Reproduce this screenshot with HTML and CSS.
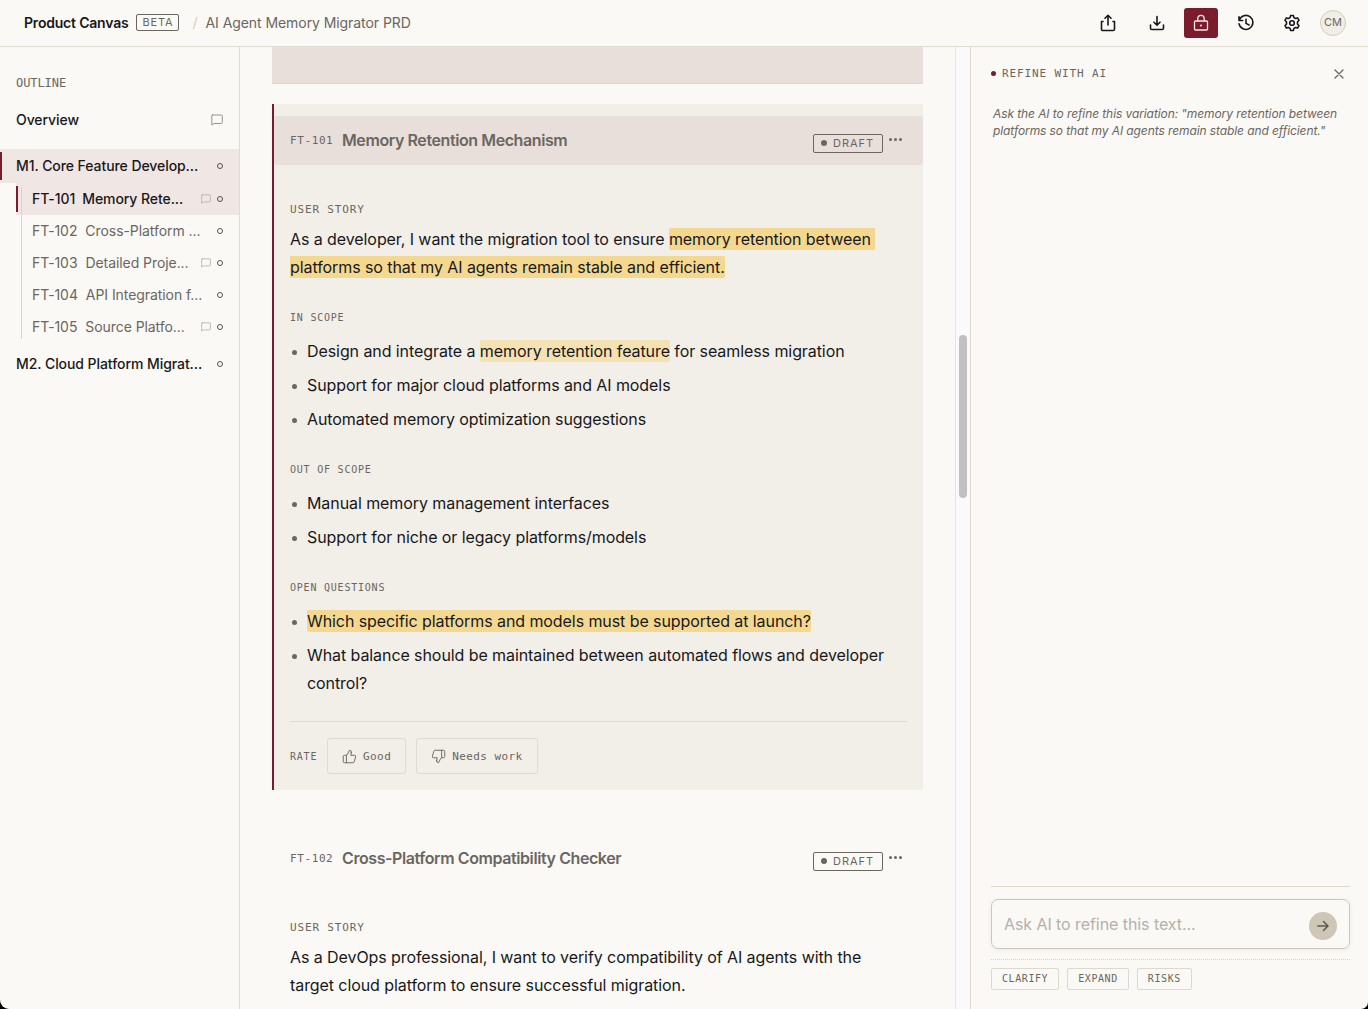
FILE: index.html
```html
<!DOCTYPE html>
<html lang="en">

<head>
  <meta charset="UTF-8" />
  <title>Product Canvas</title>
  <link rel="stylesheet" href="styles.css">
</head>

<body>
  <svg class="defs" width="0" height="0">
    <symbol id="icon-comment" viewBox="0 0 12 12">
      <path d="M1.5 1h9a.8.8 0 0 1 .8.8v6.9a.8.8 0 0 1-.8.8H3L.8 11V1.8A.8.8 0 0 1 1.5 1z" />
    </symbol>
    <symbol id="icon-thumb" viewBox="0 0 24 24">
      <path d="M7 10v12" />
      <path d="M15 5.88 14 10h5.83a2 2 0 0 1 1.92 2.56l-2.33 8A2 2 0 0 1 17.5 22H4a2 2 0 0 1-2-2v-8a2 2 0 0 1 2-2h2.76a2 2 0 0 0 1.79-1.11L12 2a3.13 3.13 0 0 1 3 3.88Z" />
    </symbol>
  </svg>

  <div class="app">
    <header class="topbar">
      <span class="brand">Product Canvas</span>
      <span class="beta">BETA</span>
      <span class="slash">/</span>
      <span class="doc-title">AI Agent Memory Migrator PRD</span>

      <div class="actions">
        <button class="icon-btn" aria-label="Share">
          <svg width="18" height="18" viewBox="0 0 18 18"><path d="M4 7.5H2.5v7.7a1.3 1.3 0 0 0 1.3 1.3h10.4a1.3 1.3 0 0 0 1.3-1.3V7.5H14M9 11V1.5M6 4.3l3-3 3 3" /></svg>
        </button>
        <button class="icon-btn" aria-label="Download">
          <svg width="18" height="18" viewBox="0 0 18 18"><path d="M2.5 11v3.2a1.3 1.3 0 0 0 1.3 1.3h10.4a1.3 1.3 0 0 0 1.3-1.3V11M9 2.5V11M6 8.2l3 3 3-3" /></svg>
        </button>
        <button class="icon-btn locked" aria-label="Lock">
          <svg width="18" height="18" viewBox="0 0 18 18"><rect x="2.5" y="7" width="13" height="9" rx="1" /><path d="M5.8 7V4.5a3.2 3.2 0 0 1 6.4 0V7" /><circle class="fill" cx="9" cy="11.5" r="1.1" /></svg>
        </button>
        <button class="icon-btn" aria-label="History">
          <svg width="18" height="18" viewBox="0 0 18 18"><path d="M2 2.8v3.7h3.7M2.2 6.3A7 7 0 1 1 2 9.7M9 5.2V9.4l3 1.6" /></svg>
        </button>
        <button class="icon-btn" aria-label="Settings">
          <svg width="18" height="18" viewBox="0 0 18 18"><path d="M7.6 1.5h2.8l.5 2.1 1.6.9 2.1-.6 1.4 2.4L14.5 8v2l1.5 1.7-1.4 2.4-2.1-.6-1.6.9-.5 2.1H7.6l-.5-2.1-1.6-.9-2.1.6L2 11.7 3.5 10V8L2 6.3l1.4-2.4 2.1.6 1.6-.9z" /><circle cx="9" cy="9" r="2.3" /></svg>
        </button>
        <span class="avatar">CM</span>
      </div>
    </header>

    <div class="workspace">
      <nav class="outline">
        <div class="outline-title">OUTLINE</div>
        <div class="row overview"><span>Overview</span><svg class="comment"><use href="#icon-comment" /></svg></div>
        <div class="row milestone active"><span>M1. Core Feature Develop...</span><i class="dot"></i></div>
        <div class="features">
          <div class="row feature active"><b>FT-101</b><span>Memory Rete...</span><svg class="comment"><use href="#icon-comment" /></svg><i class="dot"></i></div>
          <div class="row feature"><b>FT-102</b><span>Cross-Platform ...</span><i class="dot"></i></div>
          <div class="row feature"><b>FT-103</b><span>Detailed Proje...</span><svg class="comment"><use href="#icon-comment" /></svg><i class="dot"></i></div>
          <div class="row feature"><b>FT-104</b><span>API Integration f...</span><i class="dot"></i></div>
          <div class="row feature"><b>FT-105</b><span>Source Platfo...</span><svg class="comment"><use href="#icon-comment" /></svg><i class="dot"></i></div>
        </div>
        <div class="row milestone last"><span>M2. Cloud Platform Migrat...</span><i class="dot"></i></div>
      </nav>

      <main class="canvas">
        <div class="previous"></div>

        <section class="card selected">
          <div class="card-head">
            <span class="ft-id">FT-101</span>
            <h2>Memory Retention Mechanism</h2>
            <span class="status">DRAFT</span>
            <span class="more"><i></i><i></i><i></i></span>
          </div>
          <div class="card-body">
            <h3 class="story">USER STORY</h3>
            <p>As a developer, I want the migration tool to ensure <mark>memory retention between&nbsp;<br>platforms so that my AI agents remain stable and efficient.</mark></p>

            <h3>IN SCOPE</h3>
            <ul>
              <li>Design and integrate a <mark class="light">memory retention feature</mark> for seamless migration</li>
              <li>Support for major cloud platforms and AI models</li>
              <li>Automated memory optimization suggestions</li>
            </ul>

            <h3>OUT OF SCOPE</h3>
            <ul>
              <li>Manual memory management interfaces</li>
              <li>Support for niche or legacy platforms/models</li>
            </ul>

            <h3>OPEN QUESTIONS</h3>
            <ul>
              <li><mark>Which specific platforms and models must be supported at launch?</mark></li>
              <li>What balance should be maintained between automated flows and developer control?</li>
            </ul>

            <div class="rate">
              <span>RATE</span>
              <button><svg><use href="#icon-thumb" /></svg>Good</button>
              <button><svg class="down"><use href="#icon-thumb" /></svg>Needs work</button>
            </div>
          </div>
        </section>

        <section class="card">
          <div class="card-head">
            <span class="ft-id">FT-102</span>
            <h2>Cross-Platform Compatibility Checker</h2>
            <span class="status">DRAFT</span>
            <span class="more"><i></i><i></i><i></i></span>
          </div>
          <div class="card-body">
            <h3 class="story">USER STORY</h3>
            <p>As a DevOps professional, I want to verify compatibility of AI agents with the<br>target cloud platform to ensure successful migration.</p>
          </div>
        </section>
      </main>

      <div class="scrollbar"><div class="thumb"></div></div>

      <aside class="refine">
        <div class="refine-head">
          <i class="bullet"></i>
          <span>REFINE WITH AI</span>
          <svg width="10" height="10" viewBox="0 0 10 10"><path d="M1 1l8 8M9 1 1 9" /></svg>
        </div>
        <p class="hint">Ask the AI to refine this variation: "memory retention between<br>platforms so that my AI agents remain stable and efficient."</p>

        <div class="composer">
          <div class="prompt">
            <span>Ask AI to refine this text...</span>
            <button aria-label="Send"><svg width="12" height="12" viewBox="0 0 12 12"><path d="M.8 6h10M6.5 1.5 11 6l-4.5 4.5" /></svg></button>
          </div>
          <div class="chips">
            <button>CLARIFY</button>
            <button>EXPAND</button>
            <button>RISKS</button>
          </div>
        </div>
      </aside>
    </div>
  </div>
</body>

</html>
```

FILE: styles.css
```css
:root {
  --bg: #faf9f5;
  --line: #deddcf;
  --ink: #18181b;
  --muted: #6b665f;
  --wine: #7a1c2b;
  --tan: #cec6b7;
  --mono: 'DejaVu Sans Mono', monospace;
}

* {
  box-sizing: border-box;
}

body {
  margin: 0;
  background: #000;
  color: var(--ink);
  font-family: Inter, sans-serif;
}

button {
  font: inherit;
  letter-spacing: inherit;
  color: inherit;
  background: none;
  border: none;
  padding: 0;
}

svg {
  fill: none;
  stroke: currentColor;
  stroke-linecap: round;
  stroke-linejoin: round;
  flex: none;
}

.defs {
  display: none;
}

.app {
  display: flex;
  flex-direction: column;
  height: 100vh;
  background: var(--bg);
  border-radius: 0 0 7px 9px;
  overflow: hidden;
}

/* Top bar */
.topbar {
  display: flex;
  align-items: center;
  flex: none;
  height: 47px;
  padding: 0 22px 1px 24px;
  border-bottom: 1px solid var(--line);
  font-size: 14px;
}

.brand {
  font-weight: 600;
  letter-spacing: -0.2px;
}

.beta {
  margin-left: 8px;
  width: 43px;
  height: 17px;
  border: 1px solid var(--muted);
  border-radius: 2px;
  color: var(--muted);
  font-size: 11px;
  line-height: 15px;
  letter-spacing: 0.9px;
  text-align: center;
}

.slash {
  margin: 0 8px 0 13px;
  color: #d5cfbe;
}

.doc-title {
  color: var(--muted);
  letter-spacing: -0.07px;
}

.actions {
  display: flex;
  align-items: center;
  margin-left: auto;
}

.icon-btn {
  display: flex;
  align-items: center;
  justify-content: center;
  width: 34px;
  height: 30px;
  margin-right: 12px;
  border-radius: 3px;
  stroke-width: 1.6;
}

.icon-btn:first-child {
  margin-right: 15px;
}

.icon-btn:nth-child(2) {
  margin-right: 10px;
}

.icon-btn:nth-child(3) {
  margin-right: 11px;
}

.icon-btn:nth-child(5) {
  margin-right: 11px;
}

.locked {
  background: var(--wine);
  color: #f5e6e6;
  stroke-width: 1.3;
}

.locked .fill {
  fill: currentColor;
  stroke: none;
}

.avatar {
  width: 26px;
  height: 26px;
  border: 1px solid #d3ccbc;
  border-radius: 50%;
  background: #f1eee7;
  color: var(--muted);
  font-size: 11px;
  line-height: 23px;
  text-align: center;
}

.workspace {
  display: flex;
  flex: 1;
  min-height: 0;
}

/* Outline */
.outline {
  flex: none;
  width: 240px;
  padding-top: 28px;
  border-right: 1px solid var(--line);
  font-size: 14px;
  letter-spacing: -0.07px;
}

.outline-title {
  padding-left: 16px;
  color: var(--muted);
  font-family: var(--mono);
  font-size: 12px;
  line-height: 16px;
}

.row {
  display: flex;
  align-items: center;
  position: relative;
  height: 32px;
  padding: 0 16px;
  font-weight: 500;
  white-space: nowrap;
}

.row span {
  flex: 1;
}

.milestone span,
.feature span,
.feature b {
  padding-bottom: 2px;
}

.overview {
  margin: 13px 0 14px;
  height: 31px;
}

.comment {
  width: 12px;
  height: 12px;
  color: #96928c;
}

.feature .comment {
  width: 10px;
  height: 10px;
  margin-right: 6px;
  color: #b5b0ab;
}

.dot {
  width: 6px;
  height: 6px;
  border: 1px solid #57524c;
  border-radius: 50%;
}

.milestone.active {
  height: 34px;
  background: #f0e6e4;
}

.row.active::before {
  content: '';
  position: absolute;
  left: 0;
  top: 3px;
  bottom: 3px;
  width: 2px;
  background: var(--wine);
}

.features {
  position: relative;
  margin-left: 16px;
}

.features::after {
  content: '';
  position: absolute;
  left: 5px;
  top: 4px;
  bottom: 4px;
  width: 1px;
  background: #d9d4cc;
}

.feature {
  color: var(--muted);
  font-weight: 400;
}

.feature b {
  margin-right: 8px;
  font-weight: inherit;
}

.feature.active {
  background: #f0e6e4;
  color: var(--ink);
  font-weight: 500;
}

.feature.active b {
  margin-right: 7px;
}

.last {
  margin-top: 5px;
}

/* Canvas */
.canvas {
  flex: none;
  width: 715px;
  padding: 0 32px;
  overflow: hidden;
}

.previous {
  height: 37px;
  margin-bottom: 20px;
  background: #e8dfda;
  border-bottom: 1px solid #e0d6d1;
}

.card {
  margin-bottom: 32px;
  padding-top: 12px;
  border-left: 2px solid transparent;
}

.card.selected {
  background: #f2eee8;
  border-left-color: var(--wine);
}

.card-head {
  display: flex;
  align-items: center;
  height: 49px;
  padding: 0 21px 1px 16px;
  border-radius: 3px;
  color: var(--muted);
}

.selected .card-head {
  background: #e8dfda;
}

.ft-id {
  width: 52px;
  font-family: var(--mono);
  font-size: 11px;
  letter-spacing: 0.6px;
}

.card h2 {
  flex: 1;
  margin: 0;
  padding-bottom: 1px;
  font-size: 16px;
  font-weight: 600;
  letter-spacing: -0.41px;
}

.status {
  display: flex;
  align-items: center;
  width: 70px;
  height: 19px;
  margin: 7px 6px 0 0;
  padding: 0 0 1px 7px;
  border: 1px solid var(--muted);
  border-radius: 2px;
  font-size: 11px;
  letter-spacing: 1px;
}

.status::before {
  content: '';
  width: 6px;
  height: 6px;
  margin-right: 6px;
  border-radius: 50%;
  background: var(--muted);
}

.more {
  display: flex;
  gap: 2px;
  padding-bottom: 1px;
}

.more i {
  width: 3px;
  height: 3px;
  border-radius: 50%;
  background: var(--muted);
}

.card-body {
  padding: 37px 16px 16px;
}

.card h3 {
  margin: 29px 0 11px;
  color: var(--muted);
  font-family: var(--mono);
  font-size: 10px;
  font-weight: 400;
  line-height: 16px;
  letter-spacing: 0.78px;
}

.card h3.story {
  margin: 0 0 7px;
  font-size: 11px;
  letter-spacing: 0.85px;
}

.card p,
.card ul {
  margin: 0;
  font-size: 16px;
  line-height: 28px;
  letter-spacing: -0.08px;
}

.card ul {
  padding: 0;
  list-style: none;
}

.card li {
  position: relative;
  padding-left: 17px;
}

.card li + li {
  margin-top: 6px;
}

.card li::before {
  content: '';
  position: absolute;
  left: 2px;
  top: 13px;
  width: 5px;
  height: 5px;
  border-radius: 50%;
  background: var(--muted);
}

mark {
  padding: 1px 0;
  border-radius: 2px;
  background: #f5d88f;
  color: inherit;
}

mark.light {
  background: #f4e2b3;
}

.rate {
  display: flex;
  align-items: center;
  gap: 10px;
  margin-top: 24px;
  padding-top: 16px;
  border-top: 1px solid #dedbd3;
  color: var(--muted);
  font-family: var(--mono);
  font-size: 11px;
  letter-spacing: 0.42px;
}

.rate span {
  width: 27px;
  font-size: 10px;
  letter-spacing: 0.78px;
}

.rate button {
  display: flex;
  align-items: center;
  gap: 6px;
  height: 36px;
  padding: 0 14px;
  border: 1px solid #dedbd3;
  border-radius: 3px;
}

.rate svg {
  width: 15px;
  height: 15px;
  stroke-width: 1.5;
}

.rate .down {
  transform: rotate(180deg);
}

.scrollbar {
  flex: none;
  width: 15px;
  padding: 288px 3px 0;
  border-left: 1px solid #e6e5e3;
  background: #fafafa;
}

.thumb {
  height: 163px;
  border-radius: 4px;
  background: #c1c1c1;
}

/* Refine panel */
.refine {
  display: flex;
  flex-direction: column;
  flex: 1;
  padding: 18px 18px 19px 20px;
  border-left: 1px solid #dedbcd;
}

.refine-head {
  display: flex;
  align-items: center;
  height: 18px;
  padding-right: 6px;
  color: var(--muted);
  font-family: var(--mono);
  font-size: 11px;
  letter-spacing: 0.88px;
  stroke-width: 1.3;
}

.refine-head span {
  flex: 1;
  padding-bottom: 2px;
}

.bullet {
  width: 5px;
  height: 5px;
  margin: 0 6px 1px 0;
  border-radius: 50%;
  background: var(--wine);
}

.hint {
  margin: 22px 0 0 2px;
  color: var(--muted);
  font-size: 12px;
  font-style: italic;
  line-height: 17px;
  letter-spacing: -0.09px;
  white-space: nowrap;
}

.composer {
  margin-top: auto;
  padding-top: 12px;
  border-top: 1px solid #dfd9cb;
}

.prompt {
  display: flex;
  align-items: center;
  justify-content: space-between;
  height: 50px;
  padding: 0 12px;
  border: 1px solid var(--tan);
  border-radius: 7px;
  box-shadow: 0 1px 5px rgba(0, 0, 0, 0.06);
  color: #b3b1ad;
  font-size: 16px;
  letter-spacing: -0.07px;
}

.prompt button {
  display: flex;
  align-items: center;
  justify-content: center;
  width: 28px;
  height: 28px;
  margin-top: 4px;
  border-radius: 50%;
  background: var(--tan);
  color: #5d5850;
  stroke-width: 1.5;
}

.chips {
  display: flex;
  gap: 8px;
  margin-top: 10px;
  padding-top: 8px;
  border-top: 1px dotted #d5d1c8;
}

.chips button {
  height: 22px;
  padding: 0 10px 1px;
  border: 1px solid #dddacd;
  border-radius: 2px;
  color: var(--muted);
  font-family: var(--mono);
  font-size: 10px;
  letter-spacing: 0.58px;
}
```
